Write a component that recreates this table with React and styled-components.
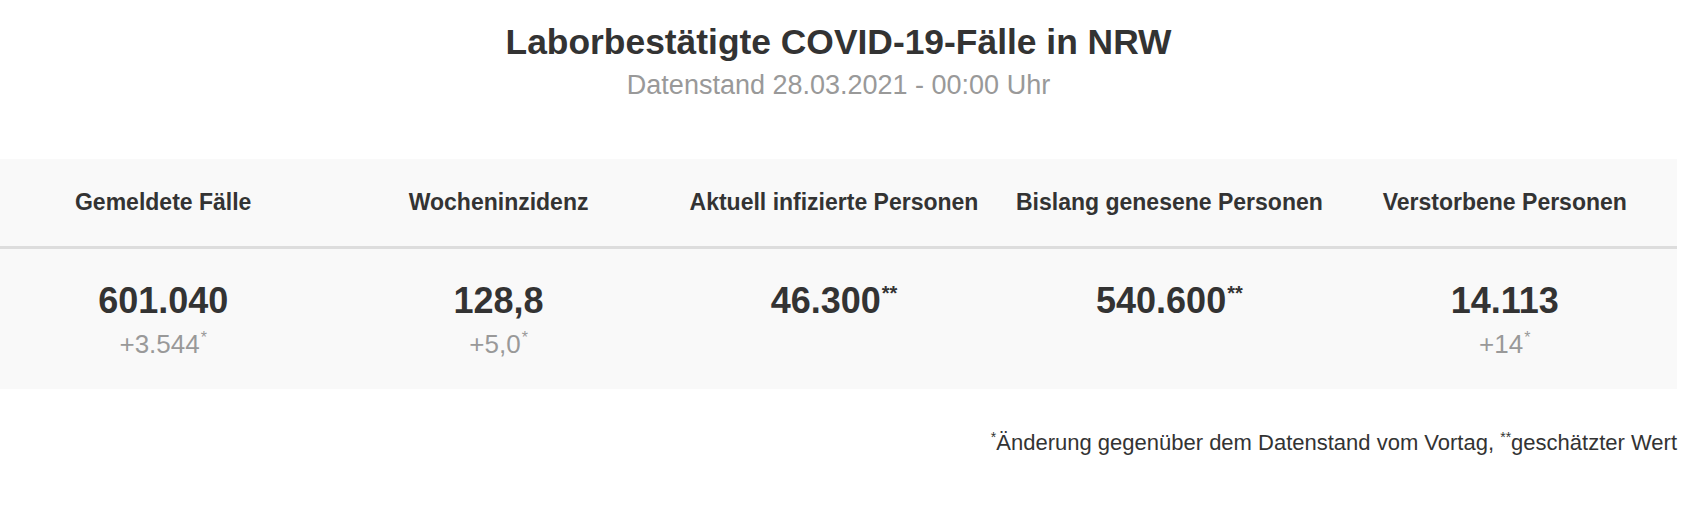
import React from "react";
import styled, { createGlobalStyle } from "styled-components";

const GlobalStyle = createGlobalStyle`
  html, body {
    margin: 0;
    padding: 0;
    background: #ffffff;
  }
  body {
    font-family: "Liberation Sans", Arial, Helvetica, sans-serif;
    color: #333333;
  }
`;

const Page = styled.div`
  width: 1677px;
  padding-top: 22px;
  display: flex;
  flex-direction: column;
`;

const Header = styled.header`
  display: flex;
  flex-direction: column;
  align-items: center;
  gap: 7px;
`;

const Title = styled.h1`
  margin: 0;
  font-size: 35.4px;
  line-height: 40px;
  font-weight: 700;
  color: #333333;
`;

const Subtitle = styled.div`
  font-size: 27px;
  line-height: 32px;
  color: #999999;
`;

const Stats = styled.section`
  margin-top: 58px;
  background: #f9f9f9;
  display: grid;
  grid-template-columns: repeat(5, 1fr);
`;

const HeadCell = styled.div`
  height: 87px;
  padding-right: 9px;
  display: flex;
  align-items: center;
  justify-content: center;
  font-size: 23px;
  font-weight: 700;
  color: #333333;
  border-bottom: 3px solid #dddddd;
  white-space: nowrap;
`;

const ValueCell = styled.div`
  padding: 32px 9px 30px 0;
  min-height: 77px;
  display: flex;
  flex-direction: column;
  align-items: center;
`;

const Value = styled.div`
  font-size: 36px;
  line-height: 40px;
  font-weight: 700;
  color: #333333;
`;

const Change = styled.div`
  margin-top: 8px;
  font-size: 26px;
  line-height: 30px;
  color: #999999;
`;

const Mark = styled.sup`
  font-size: ${(p) => (p.$big ? "20px" : "16px")};
  line-height: 0;
  vertical-align: super;
  margin-left: 1px;
`;

const Footnote = styled.p`
  margin: 41px 0 0;
  text-align: right;
  font-size: 22px;
  line-height: 26px;
  color: #333333;
`;

const FootMark = styled.sup`
  font-size: 14px;
  line-height: 0;
  vertical-align: super;
`;

const columns = [
  { label: "Gemeldete Fälle", value: "601.040", change: "+3.544" },
  { label: "Wocheninzidenz", value: "128,8", change: "+5,0" },
  { label: "Aktuell infizierte Personen", value: "46.300", estimated: true },
  { label: "Bislang genesene Personen", value: "540.600", estimated: true },
  { label: "Verstorbene Personen", value: "14.113", change: "+14" },
];

export default function App() {
  return (
    <>
      <GlobalStyle />
      <Page>
        <Header>
          <Title>Laborbestätigte COVID-19-Fälle in NRW</Title>
          <Subtitle>Datenstand 28.03.2021 - 00:00 Uhr</Subtitle>
        </Header>
        <Stats>
          {columns.map((c) => (
            <HeadCell key={c.label}>{c.label}</HeadCell>
          ))}
          {columns.map((c) => (
            <ValueCell key={c.label + "v"}>
              <Value>
                {c.value}
                {c.estimated && <Mark $big>**</Mark>}
              </Value>
              {c.change && (
                <Change>
                  {c.change}
                  <Mark>*</Mark>
                </Change>
              )}
            </ValueCell>
          ))}
        </Stats>
        <Footnote>
          <FootMark>*</FootMark>Änderung gegenüber dem Datenstand vom Vortag,{" "}
          <FootMark>**</FootMark>geschätzter Wert
        </Footnote>
      </Page>
    </>
  );
}
